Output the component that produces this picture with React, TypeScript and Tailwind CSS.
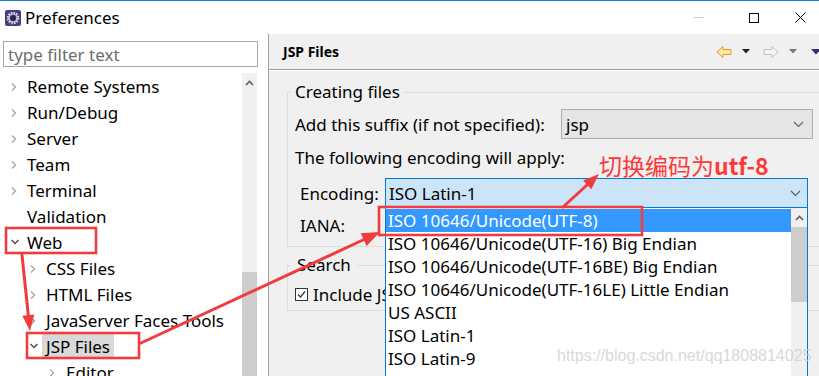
import React from "react";

const RightChev = () => (
  <svg width="8" height="10" viewBox="0 0 8 10"><polyline points="2,1.5 5.5,5 2,8.5" fill="none" stroke="#a6a6a6" strokeWidth="1.4" /></svg>
);
const DownChev = () => (
  <svg width="10" height="8" viewBox="0 0 10 8"><polyline points="1.5,2 5,5.5 8.5,2" fill="none" stroke="#4d4d4d" strokeWidth="1.5" /></svg>
);
const ComboChev = () => (
  <svg width="11" height="7" viewBox="0 0 11 7"><polyline points="1,1 5.5,5.5 10,1" fill="none" stroke="#606060" strokeWidth="1.1" /></svg>
);
const UpChev = () => (
  <svg width="9" height="6" viewBox="0 0 9 6"><polyline points="1,5 4.5,1.5 8,5" fill="none" stroke="#606060" strokeWidth="1.6" /></svg>
);

type Node = { t: string; l: number; c: "r" | "d" | "n"; sel?: boolean };
const tree: Node[] = [
  { t: "Remote Systems", l: 1, c: "r" },
  { t: "Run/Debug", l: 1, c: "r" },
  { t: "Server", l: 1, c: "r" },
  { t: "Team", l: 1, c: "r" },
  { t: "Terminal", l: 1, c: "r" },
  { t: "Validation", l: 1, c: "n" },
  { t: "Web", l: 1, c: "d" },
  { t: "CSS Files", l: 2, c: "r" },
  { t: "HTML Files", l: 2, c: "r" },
  { t: "JavaServer Faces Tools", l: 2, c: "r" },
  { t: "JSP Files", l: 2, c: "d", sel: true },
  { t: "Editor", l: 3, c: "r" },
];

const items = [
  "ISO 10646/Unicode(UTF-8)",
  "ISO 10646/Unicode(UTF-16) Big Endian",
  "ISO 10646/Unicode(UTF-16BE) Big Endian",
  "ISO 10646/Unicode(UTF-16LE) Little Endian",
  "US ASCII",
  "ISO Latin-1",
  "ISO Latin-9",
  "Japanese (EUC-JP)",
];

export default function App() {
  return (
    <div className="relative w-[819px] h-[376px] overflow-hidden bg-white text-[17px] text-black font-['Noto_Sans',sans-serif] leading-none">
      {/* Title bar */}
      <div className="h-[34px] border-t border-[#1b7fd5] flex items-center">
        <div className="ml-[5px] w-[16px] h-[16px]">
          <svg width="16" height="16" viewBox="0 0 16 16">
            <rect x="0" y="0" width="16" height="16" rx="2" fill="#4b3b7c" />
            <circle cx="8" cy="8" r="5.2" fill="none" stroke="#d8d8e0" strokeWidth="2.2" strokeDasharray="1.6 1.1" />
            <circle cx="8" cy="8" r="4" fill="none" stroke="#d8d8e0" strokeWidth="1.2" />
            <circle cx="8" cy="8" r="2.6" fill="#2d2350" />
          </svg>
        </div>
        <span className="ml-[4px] text-[17px]">Preferences</span>
        <div className="ml-auto flex items-center h-full">
          <div className="w-[55px] flex justify-center"><div className="w-[10px] h-px bg-[#c8c8c8]" /></div>
          <div className="w-[55px] flex justify-center"><div className="w-[10px] h-[10px] border border-black" /></div>
          <div className="w-[38px] flex justify-center">
            <svg width="11" height="11" viewBox="0 0 11 11"><path d="M0.5 0.5 L10.5 10.5 M10.5 0.5 L0.5 10.5" stroke="#000" strokeWidth="1" /></svg>
          </div>
        </div>
      </div>

      {/* Body */}
      <div className="flex h-[342px]">
        {/* Left panel */}
        <div className="w-[268px] bg-white flex flex-col">
          <div className="shrink-0 mt-[7px] ml-[3px] w-[255px] h-[26px] border border-[#a9a9a9] flex items-center pl-[4px] text-[#6d6d6d]">
            type filter text
          </div>
          <div className="shrink-0 mt-[6px] flex">
            <div className="w-[242px]">
              {tree.map((n) => {
                const chevX = n.l === 1 ? 10 : n.l === 2 ? 29 : 48;
                const textX = n.l === 1 ? 27 : n.l === 2 ? 46 : 66;
                return (
                  <div key={n.t} className="h-[26px] flex items-center relative">
                    <div className="absolute top-[9px]" style={{ left: chevX }}>
                      {n.c === "r" ? <RightChev /> : n.c === "d" ? <DownChev /> : null}
                    </div>
                    <div
                      className={`h-[24px] flex items-center px-[4px] ${n.sel ? "bg-[#d9d9d9]" : ""}`}
                      style={{ marginLeft: textX - 4 }}
                    >
                      {n.t}
                    </div>
                  </div>
                );
              })}
            </div>
            <div className="w-[15px] bg-[#f0f0f0] flex flex-col">
              <div className="h-[199px] flex justify-center pt-[7px]"><UpChev /></div>
              <div className="flex-1 bg-[#cdcdcd]" />
            </div>
          </div>
        </div>
        <div className="w-px bg-[#a0a0a0]" />

        {/* Right panel */}
        <div className="flex-1 bg-[#f0f0f0] flex flex-col overflow-hidden">
          <div className="shrink-0 h-[35px] flex items-center pl-[14px]">
            <span className="text-[14px] font-bold">JSP Files</span>
            <div className="ml-auto flex items-center gap-[0px]">
              <svg width="16" height="14" viewBox="0 0 16 14" className="mr-[10px]">
                <path d="M1 7 L7 1.5 L7 4.5 L15 4.5 L15 9.5 L7 9.5 L7 12.5 Z" fill="#ffe9a6" stroke="#e09a2a" strokeWidth="1" />
              </svg>
              <svg width="8" height="5" viewBox="0 0 8 5" className="mr-[13px]"><path d="M0 0 L8 0 L4 4.5 Z" fill="#222" /></svg>
              <svg width="16" height="14" viewBox="0 0 16 14" className="mr-[10px]">
                <path d="M15 7 L9 1.5 L9 4.5 L1 4.5 L1 9.5 L9 9.5 L9 12.5 Z" fill="#f4f4f4" stroke="#c2c2c2" strokeWidth="1" />
              </svg>
              <svg width="8" height="5" viewBox="0 0 8 5" className="mr-[14px]"><path d="M0 0 L8 0 L4 4.5 Z" fill="#777" /></svg>
              <svg width="10" height="6" viewBox="0 0 10 6" className="mr-[-2px]"><path d="M0 0 L10 0 L5 5.5 Z" fill="#3f2a7a" /></svg>
            </div>
          </div>
          <div className="shrink-0 h-px bg-[#a0a0a0]" />
          <div className="shrink-0 h-px bg-white" />

          <fieldset className="shrink-0 mt-[10px] ml-[18px] w-[540px] border border-[#dcdcdc] px-[3px] pb-[10px]">
            <legend className="px-[4px] h-[22px] leading-[22px]">Creating files</legend>
            <div className="mt-[6px] h-[30px] flex items-center">
              <div className="shrink-0 w-[270px] pl-[4px]">Add this suffix (if not specified):</div>
              <div className="shrink-0 w-[252px] h-[30px] bg-[#e5e5e5] border border-[#adadad] flex items-center pl-[4px]">
                <span>jsp</span>
                <span className="ml-auto mr-[8px] flex"><ComboChev /></span>
              </div>
            </div>
            <div className="mt-[7px] h-[22px] flex items-center pl-[4px]">The following encoding will apply:</div>
            <div className="mt-[10px] h-[30px] flex items-center">
              <div className="shrink-0 w-[94px] pl-[9px]">Encoding:</div>
              <div className="shrink-0 w-[423px] h-[30px] bg-[#cce4f7] border border-[#0078d7] flex items-center pl-[3px]">
                <span>ISO Latin-1</span>
                <span className="ml-auto mr-[6px] flex"><ComboChev /></span>
              </div>
            </div>
            <div className="mt-[6px] h-[22px] flex items-center pl-[9px]">IANA:</div>
          </fieldset>

          <fieldset className="shrink-0 mt-[7px] ml-[18px] w-[540px] border border-[#dcdcdc] px-[3px] pb-[5px]">
            <legend className="px-[6px] h-[22px] leading-[22px]">Search</legend>
            <div className="mt-[7px] h-[22px] flex items-center pl-[4px]">
              <div className="w-[13px] h-[13px] border border-[#333] bg-white flex items-center justify-center">
                <svg width="11" height="11" viewBox="0 0 11 11"><polyline points="2,5.5 4.5,8 9,2.5" fill="none" stroke="#333" strokeWidth="1.2" /></svg>
              </div>
              <span className="ml-[5px]">Include JSP files in search</span>
            </div>
          </fieldset>
        </div>
      </div>

      {/* Dropdown popup */}
      <div className="absolute left-[385px] top-[208px] w-[423px] h-[180px] bg-white border-x border-[#0078d7] flex">
        <div className="flex-1 pt-px">
          {items.map((it, i) => (
            <div
              key={it}
              className={`h-[23px] flex items-center pl-[2px] whitespace-nowrap ${i === 0 ? "bg-[#3399ff] text-white" : ""}`}
            >
              {it}
            </div>
          ))}
        </div>
        <div className="w-[16px] bg-[#f0f0f0] flex flex-col">
          <div className="h-[19px] flex justify-center items-center"><UpChev /></div>
          <div className="h-[75px] bg-[#cdcdcd]" />
        </div>
      </div>

      {/* Annotations */}
      <svg className="absolute inset-0 pointer-events-none" width="819" height="376">
        <g fill="none" stroke="#f03c3c" strokeWidth="2.6">
          <rect x="6" y="228" width="90" height="25" />
          <rect x="27" y="333" width="112" height="25" />
          <rect x="379" y="207" width="263" height="28" />
        </g>
        <g stroke="#f03c3c" strokeWidth="3" strokeLinecap="round">
          <line x1="22" y1="255" x2="28.3" y2="315" />
          <line x1="141" y1="343" x2="364" y2="239.5" />
          <line x1="563" y1="207" x2="587" y2="185" />
        </g>
        <g fill="#f03c3c">
          <polygon points="30,331 34.3,314.5 22.3,315.7" />
          <polygon points="380,232 366.6,245.9 360.7,233.2" />
          <polygon points="599,174 591.3,189.2 583.1,180.4" />
        </g>
      </svg>
      <div className="absolute left-[599px] top-[150px] text-[23px] leading-[30px] text-[#ff3838] font-['Noto_Sans_CJK_SC',sans-serif] whitespace-nowrap">
        切换编码为<span className="font-semibold">utf-8</span>
      </div>
      <div className="absolute left-[557px] top-[348px] text-[16px] text-[#d0d0d0] font-['Liberation_Sans',sans-serif] whitespace-nowrap opacity-80">
        https://blog.csdn.net/qq1808814025
      </div>
    </div>
  );
}
